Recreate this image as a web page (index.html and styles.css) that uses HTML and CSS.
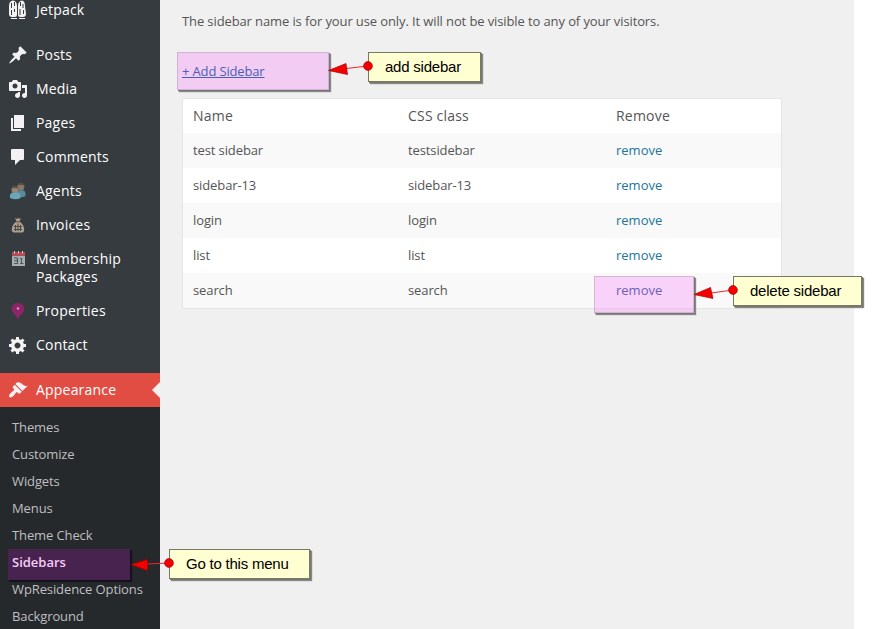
FILE: index.html
```html
<!DOCTYPE html>
<html lang="en">
<head>
<meta charset="utf-8">
<title>Sidebars</title>
<link rel="stylesheet" href="styles.css">
</head>
<body>
<div class="admin">
  <nav class="menu">
    <ul class="items">
      <li class="item"><svg class="icon" viewBox="0 0 20 20"><path d="M1 6Q1 1 5 .5Q9 1 9 6V15Q9 17 7 17H4Q1 17 1 14ZM10 6Q10 1 14 .5Q17 1 17 6L18 14Q18 17 15 17H12Q10 17 10 15Z"/><path class="cut" d="M3.500 3V8M3.500 10V15M6.500 2V6M6.500 9V12M12 9V15M12.500 2V6M15 4V8M15.500 10V14"/><path d="M3 18h6v1H3zM11 18h6v1h-6z"/></svg><span>Jetpack</span></li>
      <li class="separator"></li>
      <li class="item"><svg class="icon" viewBox="0 0 20 20"><path d="M10.440 3.020l1.820-1.820 6.360 6.350-1.830 1.820c-1.050-.68-2.480-.57-3.410.36l-.75.75c-.92.93-1.040 2.350-.35 3.410l-1.830 1.820-2.410-2.410-2.800 2.790c-.42.42-3.380 2.710-3.800 2.290s1.860-3.390 2.280-3.810l2.790-2.790L4.100 9.360l1.830-1.820c1.050.69 2.480.57 3.400-.36l.75-.75c.93-.92 1.050-2.350.36-3.410z"/></svg><span>Posts</span></li>
      <li class="item"><svg class="icon" viewBox="0 0 20 20"><path d="M13 11V4c0-.55-.45-1-1-1h-1.670L9 1H5L3.670 3H2c-.55 0-1 .45-1 1v7c0 .55.45 1 1 1h10c.55 0 1-.45 1-1zM7 4.500c1.380 0 2.500 1.120 2.500 2.500S8.380 9.500 7 9.500 4.500 8.380 4.500 7 5.620 4.500 7 4.500zM14 6h5v10.500c0 1.380-1.120 2.500-2.500 2.500S14 17.880 14 16.500s1.120-2.500 2.500-2.500c.17 0 .34.02.5.05V9h-3V6zm-4 8.050V13h2v3.500c0 1.380-1.120 2.500-2.500 2.500S7 17.880 7 16.500 8.120 14 9.500 14c.17 0 .34.02.5.05z"/></svg><span>Media</span></li>
      <li class="item"><svg class="icon" viewBox="0 0 20 20"><path d="M6 15V2h10v13H6zm-1 1h8v2H3V5h2v11z"/></svg><span>Pages</span></li>
      <li class="item"><svg class="icon" viewBox="0 0 20 20"><path d="M4 2h11q1 0 1 1v9q0 1-1 1h-3l-5 5v-5H4q-1 0-1-1V3q0-1 1-1z"/></svg><span>Comments</span></li>
      <li class="item"><svg class="icon" viewBox="0 0 20 20"><path fill="#568b9c" d="M9 16V12Q10 9 13 9Q17 9 17.500 12V15Q15 17 9 16Z"/><path fill="#69a6b8" d="M2 17V14Q3 11 7 11Q12 11 12.500 14V17Q8 19.500 2 17Z"/><circle cx="12.800" cy="6" r="3.500" fill="#87786a"/><circle cx="7" cy="8.500" r="3.500" fill="#998775"/><path fill="#5b5149" d="M9 5Q9 2 13 2T16.500 5Q13 3 9 5ZM3.500 8Q4 4.500 7 4.700T10.500 8Q7 6 3.500 8Z"/></svg><span>Agents</span></li>
      <li class="item"><svg class="icon" viewBox="0 0 20 20"><path fill="#a99e8f" d="M7 3L9 4L10 2.500L11 4L13 3L11.500 6.500C14 8 17 12 16 16Q15.500 17.500 14 17.500H6Q4.500 17.500 4 16C3 12 6 8 8.500 6.500Z"/><path stroke="#7b4d2c" d="M8 6.800H12"/><path fill="none" stroke="#504b46" d="M7.500 10V16M10 8.500V16M12.500 10V16M6 11.500H14M6 14.500H14"/></svg><span>Invoices</span></li>
      <li class="item"><svg class="icon" viewBox="0 0 20 20"><path fill="#a7acad" d="M4 7H17V17H4Z"/><path fill="#b44b55" d="M4 3H17V7H4Z"/><path stroke="#ddc9c9" d="M6.500 2V4.500M10.500 2V4.500M14.500 2V4.500"/><path fill="none" stroke="#4c5a62" stroke-width="1.200" d="M6 9H9.500V14.500H6M6.500 11.700H9.500M12 9.500H13.500V14.500M12 14.500H15.500"/></svg><span>Membership Packages</span></li>
      <li class="item"><svg class="icon" viewBox="0 0 20 20"><path fill="#8d2668" d="M10 2C6 2 3.700 5 3.700 8C3.700 12 8 13 10 18.500C12 13 16.300 12 16.300 8C16.300 5 14 2 10 2Z"/><circle cx="10" cy="7.500" r="1.300" fill="#d594bd"/></svg><span>Properties</span></li>
      <li class="item"><svg class="icon" viewBox="0 0 20 20"><path d="M18 12h-2.180c-.17.7-.44 1.350-.81 1.930l1.540 1.540-2.100 2.100-1.540-1.540c-.58.36-1.230.63-1.910.79V19H8v-2.180c-.68-.16-1.330-.43-1.910-.79l-1.540 1.540-2.120-2.120 1.540-1.540c-.36-.58-.63-1.230-.79-1.910H1V9.030h2.170c.16-.7.44-1.350.8-1.940L2.430 5.550l2.100-2.100 1.540 1.540c.58-.37 1.240-.64 1.930-.81V2h3v2.180c.68.16 1.330.43 1.910.79l1.540-1.540 2.120 2.120-1.540 1.540c.36.59.64 1.240.8 1.940H18V12zm-8.500 1.500c1.660 0 3-1.340 3-3s-1.340-3-3-3-3 1.340-3 3 1.340 3 3 3z"/></svg><span>Contact</span></li>
      <li class="separator"></li>
      <li class="item current"><svg class="icon" viewBox="0 0 20 20"><path d="M14.480 11.060L7.410 3.990l1.500-1.500c.5-.56 2.300-.47 3.510.32 1.210.8 1.430 1.280 2.910 2.100 1.180.64 2.450 1.260 4.450.85zm-.71.71L6.700 4.700 4.930 6.470c-.39.39-.39 1.020 0 1.410l1.060 1.060c.39.39.39 1.030 0 1.420-.6.6-1.430 1.110-2.210 1.690-.35.26-.7.53-1.010.84C1.430 14.230.4 16.080 1.400 17.070c.99 1 2.840-.03 4.180-1.360.31-.31.58-.66.85-1.020.57-.78 1.080-1.610 1.690-2.210.39-.39 1.020-.39 1.410 0l1.060 1.060c.39.39 1.020.39 1.410 0z"/></svg><span>Appearance</span></li>
    </ul>
    <ul class="submenu">
      <li>Themes</li>
      <li>Customize</li>
      <li>Widgets</li>
      <li>Menus</li>
      <li>Theme Check</li>
      <li class="selected">Sidebars</li>
      <li>WpResidence Options</li>
      <li>Background</li>
    </ul>
  </nav>
  <main class="content">
    <p class="note">The sidebar name is for your use only. It will not be visible to any of your visitors.</p>
    <a class="add">+ Add Sidebar</a>
    <table class="sidebars">
      <thead><tr><th class="name">Name</th><th class="css">CSS class</th><th>Remove</th></tr></thead>
      <tbody>
        <tr><td>test sidebar</td><td>testsidebar</td><td><a>remove</a></td></tr>
        <tr><td>sidebar-13</td><td>sidebar-13</td><td><a>remove</a></td></tr>
        <tr><td>login</td><td>login</td><td><a>remove</a></td></tr>
        <tr><td>list</td><td>list</td><td><a>remove</a></td></tr>
        <tr><td>search</td><td>search</td><td><a class="marked">remove</a></td></tr>
      </tbody>
    </table>
  </main>
</div>
<div class="mark mark-add"></div>
<div class="mark mark-remove"></div>
<div class="mark mark-menu"></div>
<div class="callout callout-add">add sidebar</div>
<div class="callout callout-delete">delete sidebar</div>
<div class="callout callout-menu">Go to this menu</div>
<svg class="arrows" viewBox="0 0 872 629">
  <path class="line" d="M368 66L346 68.500M733 290L711 293M169 563L147 564"/>
  <path class="head" d="M328.500 70.500L346 63.500L347.500 74.500ZM694 294.500L710.500 287.500L713 298.500ZM131 564.500L147.500 559.500V570.500Z"/>
  <circle cx="368" cy="66" r="4.400"/><circle cx="733" cy="290" r="4.400"/><circle cx="169" cy="563" r="4.400"/>
</svg>
</body>
</html>
```
FILE: styles.css
```css
* { box-sizing: border-box; }
body {
  margin: 0;
  height: 629px;
  overflow: hidden;
  position: relative;
  background: #fff;
  font: 13px/18px "Open Sans", sans-serif;
  letter-spacing: -.11px;
  color: #555;
}
ul { list-style: none; margin: 0; padding: 0; }
.admin { display: flex; width: 854px; height: 629px; }
.menu { width: 160px; flex: none; background: #363b3f; }
.items { margin-top: -7px; }
.item {
  display: flex;
  align-items: flex-start;
  gap: 8px;
  padding: 8px 20px 8px 8px;
  font-size: 14px;
  line-height: 18px;
  letter-spacing: .2px;
  color: #fff;
}
.separator { height: 11px; }
.icon { width: 20px; height: 20px; margin: -1px 0; flex: none; fill: #f3f1f1; }
.cut { fill: none; stroke: #363b3f; stroke-width: 1; }
.current { position: relative; background: #e14d43; }
.current::after {
  content: "";
  position: absolute;
  right: 0;
  top: 9px;
  border: 8px solid transparent;
  border-left: 0;
  border-right-color: #f1f1f1;
}
.submenu { height: 230px; padding: 7px 0 0 12px; background: #26292c; color: #bebfc0; }
.submenu li { height: 27px; line-height: 27px; white-space: nowrap; }
.submenu .selected { position: relative; z-index: 2; color: #f7cdf7; font-weight: 600; letter-spacing: 0; }
.content { flex: 1; padding: 12px 0 0 22px; background: #f0f0f0; }
.note { margin: 0; }
.add {
  display: block;
  position: relative;
  z-index: 2;
  margin: 32px 0 18px;
  color: #4a5fb5;
  letter-spacing: -.15px;
  text-decoration: underline;
}
.sidebars {
  width: 600px;
  table-layout: fixed;
  border-collapse: separate;
  border-spacing: 0;
  border: 1px solid #e5e5e5;
  background: #fff;
}
.sidebars th, .sidebars td { height: 35px; padding: 0 10px 2px; text-align: left; }
.sidebars th { height: 34px; padding-bottom: 0; font-size: 14px; font-weight: 400; letter-spacing: .2px; }
.sidebars .name { width: 215px; }
.sidebars .css { width: 208px; }
.sidebars tbody tr:nth-child(odd) { background: #f9f9f9; }
.sidebars a { color: #21759b; letter-spacing: 0; }
.sidebars .marked { position: relative; z-index: 2; color: #6a62b8; }
.mark {
  position: absolute;
  background: rgba(249, 157, 249, .43);
  border: 1px solid rgba(160, 140, 160, .4);
  box-shadow: 1px 1px 0 #777, 2px 2px 1px #888;
}
.mark-add { left: 177px; top: 52px; width: 152px; height: 38px; }
.mark-remove { left: 594px; top: 276px; width: 100px; height: 37px; }
.mark-menu {
  left: 8px; top: 549px; width: 122px; height: 31px;
  background: #49234f;
  border-color: #49234f;
  box-shadow: 1px 1px 1px #141019, 2px 2px 1px #181a1d;
}
.callout {
  position: absolute;
  height: 30px;
  border: 1px solid #777968;
  background: #ffffd2;
  box-shadow: 1px 1px 0 #777968, 2px 2px 1px #888;
  color: #000;
  font: 15px/27px "Liberation Sans", sans-serif;
  letter-spacing: -.22px;
  padding-left: 16px;
  white-space: nowrap;
}
.callout-add { left: 368px; top: 52px; width: 113px; }
.callout-delete { left: 733px; top: 276px; width: 129px; }
.callout-menu { left: 169px; top: 549px; width: 141px; }
.arrows { position: absolute; left: 0; top: 0; width: 872px; height: 629px; }
.line { stroke: #f02626; fill: none; }
.head, .arrows circle { fill: #f50000; stroke: #a80000; stroke-width: .7; }
```
